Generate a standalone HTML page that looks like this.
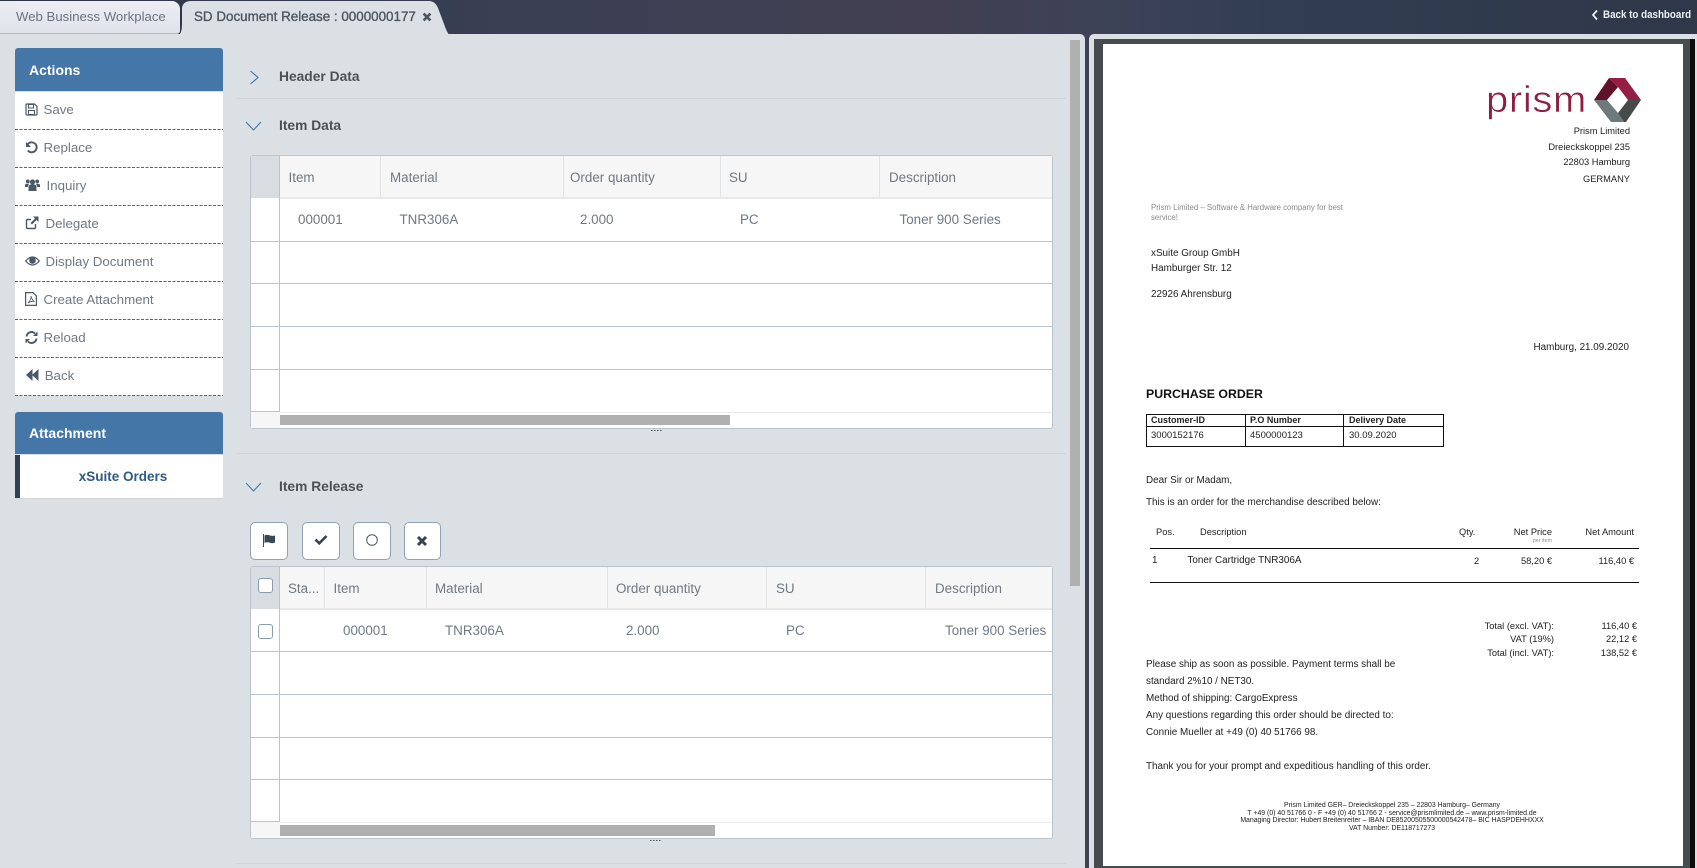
<!DOCTYPE html>
<html lang="en">
<head>
<meta charset="utf-8">
<title>SD Document Release</title>
<style>
html,body{margin:0;padding:0;width:1697px;height:868px;overflow:hidden;background:#343d50}
body{position:relative;font-family:"Liberation Sans",sans-serif;color:#6c757f}
div,span{box-sizing:border-box}
.a{position:absolute}
.t{position:absolute;line-height:16px;height:16px;white-space:nowrap}
#bar{position:absolute;left:0;top:0;width:1697px;height:868px;background:linear-gradient(90deg,#2c3446 0%,#3a3f54 30%,#423f52 55%,#3d4257 65%,#323d52 75%,#2f3849 100%)}
#left{position:absolute;left:0;top:34px;width:1085px;height:834px;background:#dae0e3;border-top-right-radius:5px}
#right{position:absolute;left:1089px;top:34px;width:608px;height:834px;background:#dae0e3;border-top-left-radius:5px}
.tab{position:absolute;font-size:13.2px;line-height:16px;white-space:nowrap}
.menu{position:absolute;left:15px;width:208px;height:38px;background:linear-gradient(90deg,#5c6670 3px,transparent 3px) left bottom/4.5px 1px repeat-x,#fff}
.m{font-size:13.3px;color:#6f7984}
.ic{position:absolute;fill:#4b5866}
.head{position:absolute;left:15px;width:208px;background:#4477a8;color:#fff;font-weight:bold;font-size:14px;border-radius:3px 3px 0 0}
.sec{position:absolute;font-weight:bold;font-size:13.8px;color:#4c5155;line-height:16px;white-space:nowrap}
.div{position:absolute;left:236px;width:830px;height:1px;background:#cfd5d8}
.tbl{position:absolute;left:250px;width:803px;background:#fff;border:1px solid #b9c4ce;border-radius:3px}
.hd{position:absolute;background:#f6f6f6}
.lh{position:absolute;left:250px;width:802px;height:1px;background:#b9c4ce}
.lv{position:absolute;width:1px;background:#b9c4ce}
.sp{position:absolute;width:1px;background:#e0e3e5}
.c{font-size:13.4px;color:#6f7984}
.btn{position:absolute;top:522px;height:38px;background:#fff;border:1px solid #8fa3b7;border-radius:5px}
.cb{position:absolute;left:258px;width:15px;height:15px;background:#fff;border:1px solid #8b9aa8;border-radius:3px}
.dots{position:absolute;width:12px;height:1px;background:linear-gradient(90deg,#4b5866 1.500px,transparent 1.500px) left top/3px 1px repeat-x}
.thumb{position:absolute;left:280px;background:#b0b0b0}
#doc{position:absolute;left:0;top:0;width:1697px;height:868px;color:#222;filter:blur(.3px)}
.d{position:absolute;white-space:nowrap;line-height:12px;height:12px;font-size:9.9px}
.r{text-align:right}
.b{font-weight:bold}
</style>
</head>
<body>
<div id="bar"></div>

<!-- tabs -->
<div class="a" style="left:0;top:1px;width:180px;height:33px;background:linear-gradient(#eceef3,#dfe2ea);border-radius:0 8px 3px 0;border-bottom:1px solid #b6bcc6"></div>
<div class="tab" style="left:16px;top:9px;color:#6a7280">Web Business Workplace</div>
<svg class="a" style="left:178px;top:0" width="274" height="36"><path d="M0 36 C3 34 4 30 4 24 L4 8 Q5 1 13 1 L251 1 Q257 1 260 8 L266 24 Q269 33 272 36 Z" fill="#dae0e3"/></svg>
<div class="tab" style="left:194px;top:9px;color:#4e5660;font-size:13.4px;-webkit-text-stroke:.35px #4e5660">SD Document Release : 0000000177</div>
<svg class="a" style="left:422px;top:12px" width="10" height="10" viewBox="0 0 10 10"><path d="M1.600 1.600L8.400 8.400M8.400 1.600L1.600 8.400" stroke="#4b5560" stroke-width="2.600"/></svg>

<svg class="a" style="left:1591px;top:9px" width="8" height="12" viewBox="0 0 8 12"><path d="M6 1.500L2 6l4 4.500" fill="none" stroke="#eef0f3" stroke-width="1.700"/></svg>
<div class="t b" style="left:1603px;top:7px;color:#eef0f3;font-size:11px;transform:scaleX(.89);transform-origin:left center">Back to dashboard</div>

<div id="left"></div>
<div id="right"></div>

<!-- Actions -->
<div class="head" style="top:48px;height:43px;line-height:44px;padding-left:14px">Actions</div>
<div class="menu" style="top:92px"></div>
<div class="menu" style="top:130px"></div>
<div class="menu" style="top:168px"></div>
<div class="menu" style="top:206px"></div>
<div class="menu" style="top:244px"></div>
<div class="menu" style="top:282px"></div>
<div class="menu" style="top:320px"></div>
<div class="menu" style="top:358px"></div>

<svg class="ic" style="left:25px;top:103px" width="13" height="13" viewBox="0 0 13 13"><path d="M1.500 1h8L12 3.500V11a1 1 0 0 1-1 1H2a1 1 0 0 1-1-1V1.500z" fill="none" stroke="#4b5866" stroke-width="1.200"/><rect x="3.500" y="1.500" width="5" height="3.500" fill="none" stroke="#4b5866"/><rect x="3.500" y="7.500" width="6" height="4" fill="none" stroke="#4b5866"/></svg>
<div class="t m" style="left:43.500px;top:102px">Save</div>
<svg class="ic" style="left:25px;top:141px" width="13" height="13" viewBox="0 0 13 13"><path d="M2.500 3.500A5 5 0 1 1 2.800 9.500" fill="none" stroke="#4b5866" stroke-width="1.900"/><path d="M1 1v5h5z" fill="#4b5866"/></svg>
<div class="t m" style="left:43.500px;top:140px">Replace</div>
<svg class="ic" style="left:25px;top:178px" width="15" height="14" viewBox="0 0 15 14"><circle cx="7.500" cy="4" r="2.600"/><circle cx="2.800" cy="3.400" r="1.900"/><circle cx="12.200" cy="3.400" r="1.900"/><path d="M3.500 13V9a2.500 2.500 0 0 1 2.500-2.500h3A2.500 2.500 0 0 1 11.500 9v4zM0 9V7.500A1.800 1.800 0 0 1 1.800 5.800H4L2.700 9zM15 9V7.500a1.800 1.800 0 0 0-1.800-1.700H11L12.300 9z"/></svg>
<div class="t m" style="left:46.500px;top:178px">Inquiry</div>
<svg class="ic" style="left:25px;top:216px" width="14" height="14" viewBox="0 0 14 14"><path d="M10.500 8v3.500a1 1 0 0 1-1 1h-7a1 1 0 0 1-1-1v-7a1 1 0 0 1 1-1H6" fill="none" stroke="#4b5866" stroke-width="1.400"/><path d="M8 .500h5.500V6l-2-2L7 8.500 5.500 7 10 2.500z"/></svg>
<div class="t m" style="left:45.500px;top:216px">Delegate</div>
<svg class="ic" style="left:25px;top:255px" width="15" height="12" viewBox="0 0 15 12"><path d="M.700 6Q7.500-2 14.300 6 7.500 14 .700 6z" fill="none" stroke="#4b5866" stroke-width="1.200"/><circle cx="7.500" cy="5.500" r="3.300"/></svg>
<div class="t m" style="left:45.500px;top:254px">Display Document</div>
<svg class="ic" style="left:25px;top:292px" width="12" height="14" viewBox="0 0 12 14"><path d="M.600.600h7.400l3.400 3.400v9.400H.600z" fill="none" stroke="#4b5866" stroke-width="1.200"/><path d="M3 11C5 9 6.500 6 6 4c.600 3 1.500 4.500 3.500 5.500-2.500-.500-4.500 0-6.500 1.500z" fill="none" stroke="#4b5866" stroke-width=".800"/></svg>
<div class="t m" style="left:43.500px;top:292px">Create Attachment</div>
<svg class="ic" style="left:25px;top:331px" width="13" height="13" viewBox="0 0 13 13"><path d="M1.500 5.500A5 5 0 0 1 10 2.500" fill="none" stroke="#4b5866" stroke-width="1.900"/><path d="M12.500.500v4.500H8z"/><path d="M11.500 7.500A5 5 0 0 1 3 10.500" fill="none" stroke="#4b5866" stroke-width="1.900"/><path d="M.500 12.500V8H5z"/></svg>
<div class="t m" style="left:43.500px;top:330px">Reload</div>
<svg class="ic" style="left:26px;top:369px" width="13" height="12" viewBox="0 0 13 12"><path d="M6.500 0v12L0 6zM12.500 0v12L6 6z"/></svg>
<div class="t m" style="left:44.700px;top:368px">Back</div>

<!-- Attachment -->
<div class="head" style="top:412px;height:42px;line-height:42px;padding-left:14px">Attachment</div>
<div class="a" style="left:15px;top:455px;width:208px;height:43px;background:#fff;border-left:5px solid #2f4050;box-shadow:0 1px 0 #cfd5d8"></div>
<div class="t b" style="left:15px;top:469px;width:216px;text-align:center;font-size:13.500px;color:#2d5b85">xSuite Orders</div>

<!-- Section heads -->
<svg class="a" style="left:249px;top:70px" width="11" height="15" viewBox="0 0 11 15"><path d="M1.500 1l7.500 6.500L1.500 14" fill="none" stroke="#4477a8" stroke-width="1.100"/></svg>
<div class="sec" style="left:279px;top:69px">Header Data</div>
<div class="div" style="top:98px"></div>
<svg class="a" style="left:245px;top:121px" width="17" height="10" viewBox="0 0 17 10"><path d="M1 1l7.500 8L16 1" fill="none" stroke="#4477a8" stroke-width="1.100"/></svg>
<div class="sec" style="left:279px;top:118px">Item Data</div>

<!-- Table 1 -->
<div class="tbl" style="top:155px;height:274px"></div>
<div class="hd" style="left:251px;top:156px;width:28px;height:42px;background:#d7dde1"></div>
<div class="hd" style="left:280px;top:156px;width:772px;height:42px"></div>
<div class="a" style="left:280px;top:197px;width:772px;height:2px;background:#e6e8ea"></div>
<div class="sp" style="left:380px;top:156px;height:41px"></div>
<div class="sp" style="left:563px;top:156px;height:41px"></div>
<div class="sp" style="left:720px;top:156px;height:41px"></div>
<div class="sp" style="left:879px;top:156px;height:41px"></div>
<div class="lv" style="left:279px;top:156px;height:256px"></div>
<div class="lh" style="top:241px"></div>
<div class="lh" style="top:283px"></div>
<div class="lh" style="top:326px"></div>
<div class="lh" style="top:369px"></div>
<div class="a" style="left:251px;top:411px;width:29px;height:1px;background:#b9c4ce"></div>
<div class="a" style="left:280px;top:412px;width:772px;height:1px;background:#e6e8ea"></div>
<div class="a" style="left:251px;top:412px;width:29px;height:16px;background:#f6f6f6"></div>
<div class="thumb" style="top:415px;width:450px;height:10px"></div>
<div class="dots" style="left:651px;top:430px"></div>
<div class="t c" style="left:288.500px;top:170px">Item</div>
<div class="t c" style="left:390px;top:170px">Material</div>
<div class="t c" style="left:570px;top:170px">Order quantity</div>
<div class="t c" style="left:729px;top:170px">SU</div>
<div class="t c" style="left:889px;top:170px">Description</div>
<div class="t c" style="left:298px;top:212px">000001</div>
<div class="t c" style="left:399.500px;top:212px">TNR306A</div>
<div class="t c" style="left:580px;top:212px">2.000</div>
<div class="t c" style="left:740px;top:212px">PC</div>
<div class="t c" style="left:899.500px;top:212px">Toner 900 Series</div>

<div class="div" style="top:453px"></div>
<svg class="a" style="left:245px;top:482px" width="17" height="10" viewBox="0 0 17 10"><path d="M1 1l7.500 8L16 1" fill="none" stroke="#4477a8" stroke-width="1.100"/></svg>
<div class="sec" style="left:279px;top:479px">Item Release</div>

<!-- Toolbar -->
<div class="btn" style="left:250px;width:38px"></div>
<div class="btn" style="left:302px;width:38px"></div>
<div class="btn" style="left:353px;width:38px"></div>
<div class="btn" style="left:404px;width:37px"></div>
<svg class="a" style="left:262px;top:534px" width="14" height="13" viewBox="0 0 14 13"><path d="M1 0h1v13H1z" fill="#3b4856"/><path d="M2.500 1.500C5 .500 6.500 1 8 1.500s3.500.500 5 0v7c-1.500.800-3.500.800-5 .200s-3.500-.700-5.500.300z" fill="#3b4856"/></svg>
<svg class="a" style="left:314px;top:534px" width="14" height="11" viewBox="0 0 14 11"><path d="M1.500 5.500l3.800 3.800L12.500 2" fill="none" stroke="#35424f" stroke-width="2.600"/></svg>
<svg class="a" style="left:364px;top:533px" width="16" height="14" viewBox="0 0 16 14"><circle cx="8" cy="7" r="5.300" fill="none" stroke="#4b5866" stroke-width="1"/></svg>
<svg class="a" style="left:416px;top:535px" width="12" height="12" viewBox="0 0 12 12"><path d="M2 2l8 8M10 2l-8 8" stroke="#35424f" stroke-width="3"/></svg>

<!-- Table 2 -->
<div class="tbl" style="top:566px;height:273px"></div>
<div class="hd" style="left:251px;top:567px;width:28px;height:42px;background:#d7dde1"></div>
<div class="hd" style="left:280px;top:567px;width:772px;height:42px"></div>
<div class="a" style="left:280px;top:608px;width:772px;height:2px;background:#e6e8ea"></div>
<div class="sp" style="left:324px;top:567px;height:41px"></div>
<div class="sp" style="left:426px;top:567px;height:41px"></div>
<div class="sp" style="left:607px;top:567px;height:41px"></div>
<div class="sp" style="left:766px;top:567px;height:41px"></div>
<div class="sp" style="left:925px;top:567px;height:41px"></div>
<div class="lv" style="left:279px;top:567px;height:255px"></div>
<div class="lh" style="top:651px"></div>
<div class="lh" style="top:694px"></div>
<div class="lh" style="top:737px"></div>
<div class="lh" style="top:779px"></div>
<div class="a" style="left:251px;top:821px;width:29px;height:1px;background:#b9c4ce"></div>
<div class="a" style="left:280px;top:822px;width:772px;height:1px;background:#eceeef"></div>
<div class="a" style="left:251px;top:822px;width:29px;height:16px;background:#f6f6f6"></div>
<div class="thumb" style="top:825px;width:435px;height:11px"></div>
<div class="dots" style="left:650px;top:840px"></div>
<div class="cb" style="top:578px"></div>
<div class="cb" style="top:624px"></div>
<div class="t c" style="left:288px;top:581px">Sta...</div>
<div class="t c" style="left:333.500px;top:581px">Item</div>
<div class="t c" style="left:435px;top:581px">Material</div>
<div class="t c" style="left:616px;top:581px">Order quantity</div>
<div class="t c" style="left:776px;top:581px">SU</div>
<div class="t c" style="left:935px;top:581px">Description</div>
<div class="t c" style="left:343px;top:623px">000001</div>
<div class="t c" style="left:445px;top:623px">TNR306A</div>
<div class="t c" style="left:626px;top:623px">2.000</div>
<div class="t c" style="left:786px;top:623px">PC</div>
<div class="t c" style="left:945px;top:623px">Toner 900 Series</div>

<div class="div" style="top:863px"></div>

<!-- Scrollbar -->
<div class="a" style="left:1070px;top:40px;width:10px;height:546px;background:#b0b0b0"></div>

<!-- Viewer -->
<div class="a" style="left:1094px;top:39px;width:601px;height:829px;background:#474c4f"></div>
<div class="a" style="left:1690px;top:39px;width:5px;height:829px;background:#0c0c0c"></div>
<div class="a" style="left:1103px;top:44px;width:580px;height:822px;background:#fff"></div>

<div id="doc">
<div class="d" style="left:1486px;top:79px;height:42px;line-height:42px;font-size:37px;letter-spacing:.6px;color:#8e1f42;-webkit-text-stroke:.5px #fff;transform:scaleX(1.08);transform-origin:left center">prism</div>
<svg class="a" style="left:1592px;top:76px" width="50" height="48" viewBox="0 0 50 48">
<path d="M2 24L17 2l9 9-11 13z" fill="#5f1229"/>
<path d="M17 2h16l16 22H36L26 11z" fill="#951e44"/>
<path d="M2 24h13l11 13 6 9H19z" fill="#6f787b"/>
<path d="M49 24H36L26 37l6 9h2z" fill="#454a4a"/>
</svg>
<div class="d r" style="right:67px;top:125px;font-size:9.300px">Prism Limited</div>
<div class="d r" style="right:67px;top:141px;font-size:9.300px">Dreieckskoppel 235</div>
<div class="d r" style="right:67px;top:156px;font-size:9.300px">22803 Hamburg</div>
<div class="d r" style="right:67px;top:173px;font-size:9.300px">GERMANY</div>
<div class="d" style="left:1151px;top:202px;font-size:7.800px;color:#8a8a8a">Prism Limited – Software &amp; Hardware company for best</div>
<div class="d" style="left:1151px;top:212px;font-size:7.800px;color:#8a8a8a">service!</div>
<div class="d" style="left:1151px;top:248px">xSuite Group GmbH</div>
<div class="d" style="left:1151px;top:263px">Hamburger Str. 12</div>
<div class="d" style="left:1151px;top:289px">22926 Ahrensburg</div>
<div class="d r" style="right:68px;top:342px">Hamburg, 21.09.2020</div>
<div class="d b" style="left:1146px;top:388px;font-size:12.300px;color:#111">PURCHASE ORDER</div>

<div class="a" style="left:1146px;top:414px;width:298px;height:33px;border:1px solid #111"></div>
<div class="a" style="left:1146px;top:426px;width:298px;height:1px;background:#111"></div>
<div class="a" style="left:1245px;top:414px;width:1px;height:33px;background:#111"></div>
<div class="a" style="left:1343px;top:414px;width:1px;height:33px;background:#111"></div>
<div class="d b" style="left:1151px;top:414px;font-size:9px">Customer-ID</div>
<div class="d b" style="left:1250px;top:414px;font-size:9px">P.O Number</div>
<div class="d b" style="left:1349px;top:414px;font-size:9px">Delivery Date</div>
<div class="d" style="left:1151px;top:430px;font-size:9.500px">3000152176</div>
<div class="d" style="left:1250px;top:430px;font-size:9.500px">4500000123</div>
<div class="d" style="left:1349px;top:430px;font-size:9.500px">30.09.2020</div>

<div class="d" style="left:1146px;top:475px">Dear Sir or Madam,</div>
<div class="d" style="left:1146px;top:497px">This is an order for the merchandise described below:</div>

<div class="d" style="left:1156px;top:526px;font-size:9.300px">Pos.</div>
<div class="d" style="left:1200px;top:526px;font-size:9.300px">Description</div>
<div class="d" style="left:1459px;top:526px;font-size:9.300px">Qty.</div>
<div class="d r" style="right:145px;top:526px;font-size:9.300px">Net Price</div>
<div class="d r" style="right:63px;top:526px;font-size:9.300px">Net Amount</div>
<div class="d r" style="right:145px;top:535px;font-size:5.300px;color:#8a8a8a">per item</div>
<div class="a" style="left:1150px;top:548px;width:489px;height:1px;background:#111"></div>
<div class="d" style="left:1152px;top:555px">1</div>
<div class="d" style="left:1187.500px;top:555px">Toner Cartridge TNR306A</div>
<div class="d" style="left:1474px;top:555px;font-size:9.300px">2</div>
<div class="d r" style="right:145px;top:555px;font-size:9.300px">58,20 €</div>
<div class="d r" style="right:63px;top:555px;font-size:9.300px">116,40 €</div>
<div class="a" style="left:1150px;top:582px;width:489px;height:1px;background:#111"></div>

<div class="d r" style="right:143px;top:620px;font-size:9.300px">Total (excl. VAT):</div>
<div class="d r" style="right:60px;top:620px;font-size:9.300px">116,40 €</div>
<div class="d r" style="right:143px;top:633px;font-size:9.300px">VAT (19%)</div>
<div class="d r" style="right:60px;top:633px;font-size:9.300px">22,12 €</div>
<div class="d r" style="right:143px;top:647px;font-size:9.300px">Total (incl. VAT):</div>
<div class="d r" style="right:60px;top:647px;font-size:9.300px">138,52 €</div>

<div class="d" style="left:1146px;top:659px">Please ship as soon as possible. Payment terms shall be</div>
<div class="d" style="left:1146px;top:676px">standard 2%10 / NET30.</div>
<div class="d" style="left:1146px;top:693px">Method of shipping: CargoExpress</div>
<div class="d" style="left:1146px;top:710px">Any questions regarding this order should be directed to:</div>
<div class="d" style="left:1146px;top:727px">Connie Mueller at +49 (0) 40 51766 98.</div>
<div class="d" style="left:1146px;top:761px">Thank you for your prompt and expeditious handling of this order.</div>

<div class="d" style="left:1192px;width:400px;text-align:center;top:800px;font-size:6.900px;height:8px;line-height:12px">Prism Limited GER– Dreieckskoppel 235 – 22803 Hamburg– Germany</div>
<div class="d" style="left:1192px;width:400px;text-align:center;top:808px;font-size:6.900px;height:8px;line-height:12px">T +49 (0) 40 51766 0 - F +49 (0) 40 51766 2 - service@prismlimited.de – www.prism-limited.de</div>
<div class="d" style="left:1192px;width:400px;text-align:center;top:815px;font-size:6.900px;height:8px;line-height:12px">Managing Director: Hubert Breitenreiter – IBAN DE85200505500000542478– BIC HASPDEHHXXX</div>
<div class="d" style="left:1192px;width:400px;text-align:center;top:823px;font-size:6.900px;height:8px;line-height:12px">VAT Number: DE118717273</div>
</div>
</body>
</html>
